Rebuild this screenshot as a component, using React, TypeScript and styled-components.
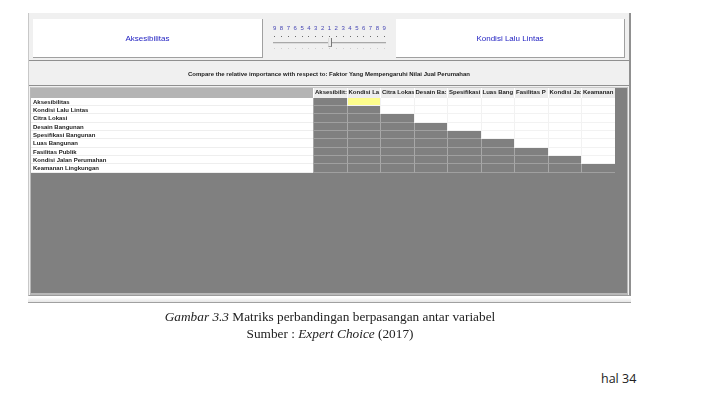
import React from "react";
import styled, { createGlobalStyle } from "styled-components";

const Global = createGlobalStyle`
  html, body { margin: 0; padding: 0; background: #fff; }
  body { width: 710px; height: 406px; overflow: hidden; }
`;

const Page = styled.div`
  width: 710px;
  height: 406px;
  padding-top: 13px;
  box-sizing: border-box;
  display: flex;
  flex-direction: column;
`;

const Window = styled.div`
  margin-left: 28px;
  width: 603px;
  height: 283px;
  flex: none;
  box-sizing: border-box;
  background: #f0f0f0;
  border-left: 1px solid #c8c8c8;
  border-right: 2px solid #909090;
  border-bottom: 1px solid #9a9a9a;
  display: flex;
  flex-direction: column;
`;

const TopPanel = styled.div`
  height: 48px;
  flex: none;
  box-sizing: border-box;
  padding: 6px 4px 2px 4px;
  display: flex;
  border-bottom: 1px solid #909090;
`;

const NameBox = styled.div<{ $w: number }>`
  width: ${(p) => p.$w}px;
  flex: none;
  height: 39px;
  box-sizing: border-box;
  background: #fff;
  border-right: 1px solid #a0a0a0;
  border-bottom: 1px solid #a0a0a0;
  display: flex;
  align-items: center;
  justify-content: center;
  font: 8px "Liberation Sans", Arial, sans-serif;
  color: #1c1cc0;
  filter: blur(0.3px);
`;

const SliderArea = styled.div`
  flex: 1;
  padding: 0 10px;
  display: flex;
  flex-direction: column;
`;

const Scale = styled.div`
  display: flex;
  justify-content: space-between;
  margin-top: 5px;
  height: 9px;
  font: 6px/9px "Liberation Sans", Arial, sans-serif;
  color: #4646b4;
  filter: blur(0.25px);
`;

const Ticks = styled.div<{ $light?: boolean }>`
  display: flex;
  justify-content: space-between;
  height: 1px;
  padding: 0 1px;
  margin-top: ${(p) => (p.$light ? "0" : "3px")};
  span {
    width: 1px;
    height: 1px;
    background: ${(p) => (p.$light ? "#cfcfcf" : "#6a6a6a")};
  }
`;

const TrackWrap = styled.div`
  position: relative;
  height: 10px;
  margin-top: 1px;
`;

const Track = styled.div`
  margin-top: 4px;
  height: 2px;
  box-sizing: border-box;
  background: #a8a8a8;
  border-bottom: 1px solid #dcdcdc;
`;

const Thumb = styled.div`
  position: absolute;
  left: 55px;
  top: 0;
  width: 4px;
  height: 9px;
  box-sizing: border-box;
  background: #ececec;
  border-right: 1px solid #777;
  border-bottom: 1px solid #999;
  border-left: 1px solid #ddd;
`;

const ComparePanel = styled.div`
  margin-top: 2px;
  height: 23px;
  flex: none;
  box-sizing: border-box;
  border-bottom: 1px solid #909090;
  display: flex;
  align-items: center;
  justify-content: center;
  font: bold 6px "Liberation Sans", Arial, sans-serif;
  color: #202020;
  filter: blur(0.25px);
`;

const GridPane = styled.div`
  margin: 1px 1px 0 1px;
  flex: 1;
  background: #808080;
  border: 1px solid #b8b8b8;
  border-top-color: #c8c8c8;
  border-bottom-width: 2px;
  min-height: 0;
`;

const Matrix = styled.div`
  display: grid;
  grid-template-columns: 282px repeat(9, 33.5px);
  grid-template-rows: 9.5px repeat(9, 8.37px);
`;

const Corner = styled.div`
  background: #b4b4b4;
`;

const ColHead = styled.div`
  background: #ededed;
  border-left: 1px solid #fff;
  box-sizing: border-box;
  overflow: hidden;
  white-space: nowrap;
  padding-left: 1px;
  font: bold 6px/9.5px "Liberation Sans", Arial, sans-serif;
  color: #222;
  filter: blur(0.25px);
`;

const RowHead = styled.div`
  background: #fff;
  border-bottom: 1px solid #eee;
  box-sizing: border-box;
  padding-left: 2px;
  font: bold 6px/8px "Liberation Sans", Arial, sans-serif;
  color: #222;
  filter: blur(0.25px);
  overflow: hidden;
`;

const Cell = styled.div<{ $kind: "gray" | "open" | "active" }>`
  box-sizing: border-box;
  border-left: 1px solid ${(p) => (p.$kind === "gray" ? "#a8a8a8" : "#f2f2f2")};
  border-bottom: 1px solid ${(p) => (p.$kind === "gray" ? "#a0a0a0" : "#f2f2f2")};
  background: ${(p) =>
    p.$kind === "gray" ? "#808080" : p.$kind === "active" ? "#fdfd8c" : "#fff"};
`;

const Rule = styled.div`
  margin-left: 28px;
  width: 603px;
  height: 7px;
  flex: none;
  box-sizing: border-box;
  background: linear-gradient(#fff 20%, #e6e6e6);
  border-bottom: 1px solid #a0a0a0;
`;

const Caption = styled.div`
  margin-top: 5px;
  width: 660px;
  text-align: center;
  font: 13.3px/17px "Liberation Serif", "Times New Roman", serif;
  color: #222;
  filter: blur(0.2px);
`;

const PageNo = styled.div`
  margin-top: 29px;
  margin-left: 601px;
  font: 12.5px/16px "Open Sans", "Noto Sans", sans-serif;
  color: #222;
`;

const names = [
  "Aksesibilitas",
  "Kondisi Lalu Lintas",
  "Citra Lokasi",
  "Desain Bangunan",
  "Spesifikasi Bangunan",
  "Luas Bangunan",
  "Fasilitas Publik",
  "Kondisi Jalan Perumahan",
  "Keamanan Lingkungan",
];
const heads = [
  "Aksesibilit:",
  "Kondisi La",
  "Citra Lokas",
  "Desain Ba:",
  "Spesifikasi",
  "Luas Bang",
  "Fasilitas P",
  "Kondisi Ja:",
  "Keamanan",
];
const nums = [9, 8, 7, 6, 5, 4, 3, 2, 1, 2, 3, 4, 5, 6, 7, 8, 9];

function TickRow({ light }: { light?: boolean }) {
  return (
    <Ticks $light={light}>
      {nums.map((_, i) => (
        <span key={i} />
      ))}
    </Ticks>
  );
}

export default function App() {
  return (
    <Page>
      <Global />
      <Window>
        <TopPanel>
          <NameBox $w={230}>Aksesibilitas</NameBox>
          <SliderArea>
            <Scale>
              {nums.map((n, i) => (
                <span key={i}>{n}</span>
              ))}
            </Scale>
            <TickRow />
            <TrackWrap>
              <Track />
              <Thumb />
            </TrackWrap>
            <TickRow light />
          </SliderArea>
          <NameBox $w={229}>Kondisi Lalu Lintas</NameBox>
        </TopPanel>
        <ComparePanel>
          Compare the relative importance with respect to: Faktor Yang Mempengaruhi Nilai Jual Perumahan
        </ComparePanel>
        <GridPane>
          <Matrix>
            <Corner />
            {heads.map((h) => (
              <ColHead key={h}>{h}</ColHead>
            ))}
            {names.map((name, r) => (
              <React.Fragment key={name}>
                <RowHead>{name}</RowHead>
                {heads.map((h, c) => (
                  <Cell
                    key={h}
                    $kind={c <= r ? "gray" : r === 0 && c === 1 ? "active" : "open"}
                  />
                ))}
              </React.Fragment>
            ))}
          </Matrix>
        </GridPane>
      </Window>
      <Rule />
      <Caption>
        <div>
          <i>Gambar 3.3</i> Matriks perbandingan berpasangan antar variabel
        </div>
        <div>
          Sumber : <i>Expert Choice</i> (2017)
        </div>
      </Caption>
      <PageNo>hal 34</PageNo>
    </Page>
  );
}
